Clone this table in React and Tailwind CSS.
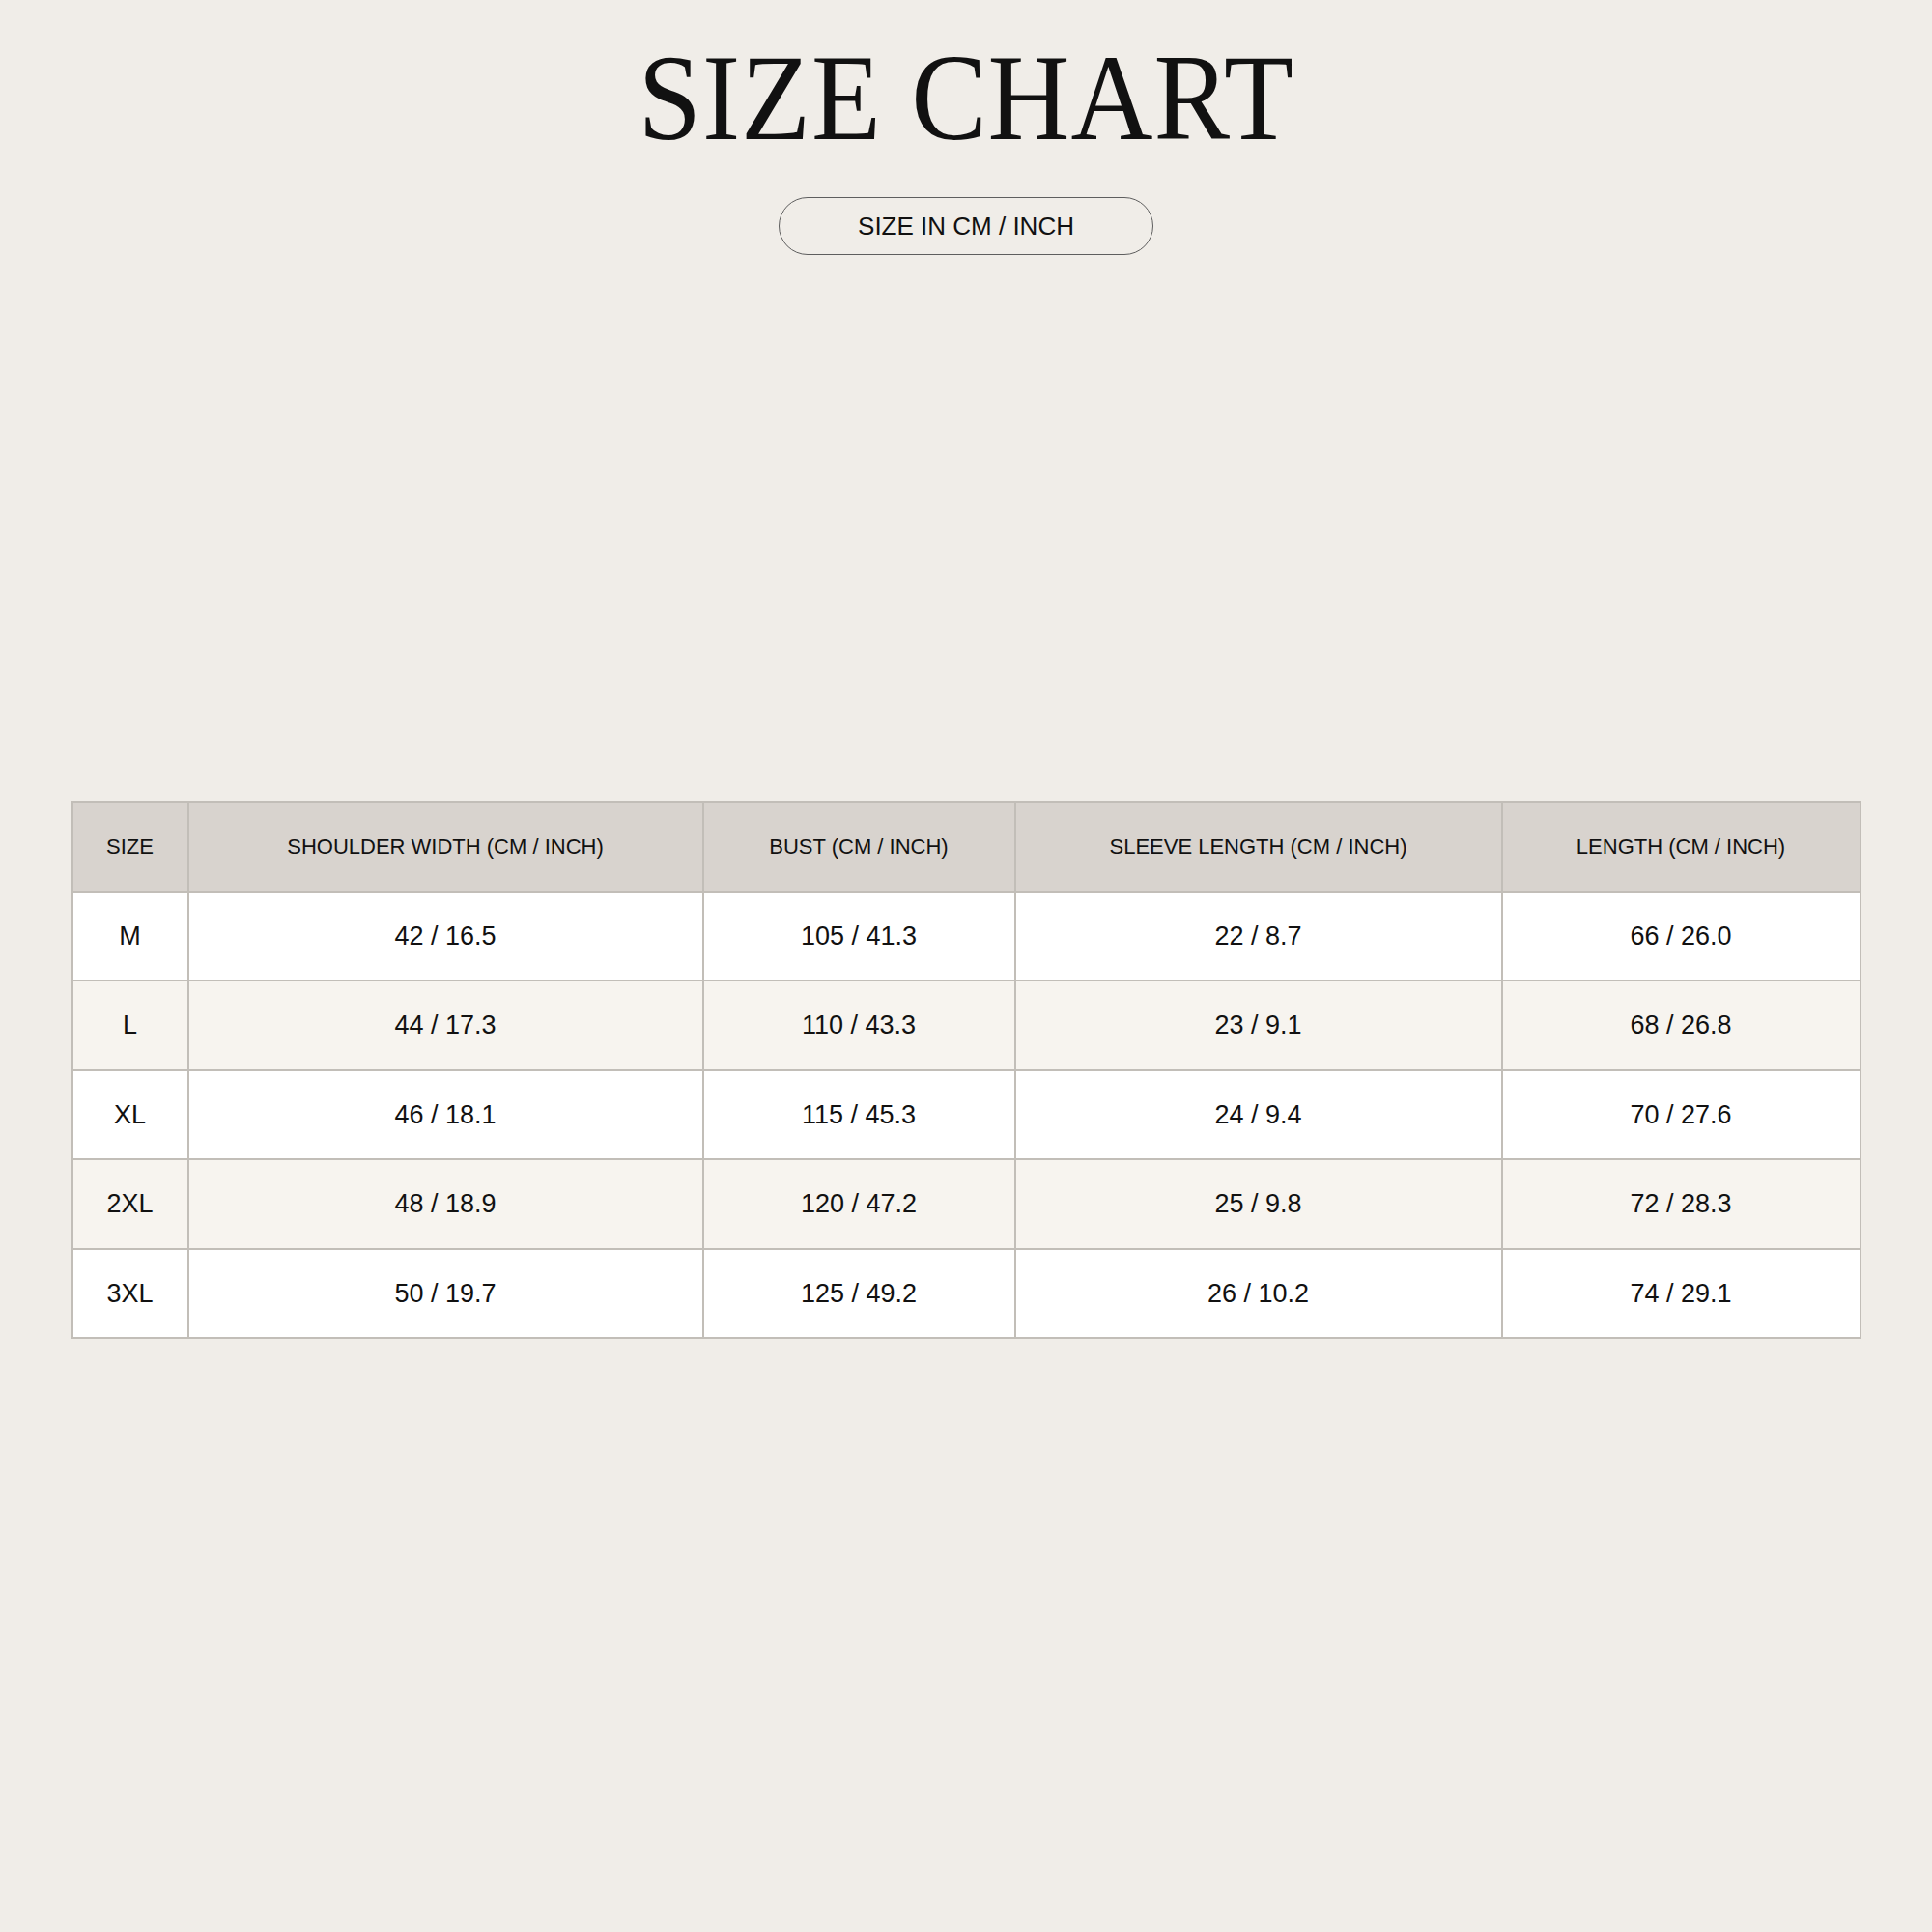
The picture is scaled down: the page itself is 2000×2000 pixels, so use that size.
const rows = [
    { size: "M", shoulder: "42 / 16.5", bust: "105 / 41.3", sleeve: "22 / 8.7", length: "66 / 26.0" },
    { size: "L", shoulder: "44 / 17.3", bust: "110 / 43.3", sleeve: "23 / 9.1", length: "68 / 26.8" },
    { size: "XL", shoulder: "46 / 18.1", bust: "115 / 45.3", sleeve: "24 / 9.4", length: "70 / 27.6" },
    { size: "2XL", shoulder: "48 / 18.9", bust: "120 / 47.2", sleeve: "25 / 9.8", length: "72 / 28.3" },
    { size: "3XL", shoulder: "50 / 19.7", bust: "125 / 49.2", sleeve: "26 / 10.2", length: "74 / 29.1" },
];

const headers = [
    "SIZE",
    "SHOULDER WIDTH (CM / INCH)",
    "BUST (CM / INCH)",
    "SLEEVE LENGTH (CM / INCH)",
    "LENGTH (CM / INCH)",
];

const App = () => {
    return (
        <div className="w-[2000px] h-[2000px] bg-[#f0ede8] text-[#111] font-['Liberation_Sans',Arial,sans-serif] flex flex-col items-center">
            <div className="pt-[37px] h-[171px] flex justify-center">
                <h1 className="inline-block scale-x-[0.92] font-['Liberation_Serif','Times_New_Roman',serif] text-[128px] leading-none tracking-[1px] whitespace-nowrap">
                    SIZE CHART
                </h1>
            </div>

            <div className="mt-[33px] w-[388px] h-[60px] rounded-full border border-[#5e5e5e] flex items-center justify-center text-[26px] leading-none">
                SIZE IN CM / INCH
            </div>

            <table className="mt-[565px] w-[1851px] table-fixed border-collapse border-2 border-[#c2beb8]">
                <colgroup>
                    <col className="w-[120px]" />
                    <col className="w-[533px]" />
                    <col className="w-[323px]" />
                    <col className="w-[504px]" />
                    <col className="w-[371px]" />
                </colgroup>
                <thead>
                    <tr className="h-[92.5px] bg-[#d8d3ce]">
                        {headers.map((h) => (
                            <th key={h} className="border-2 border-[#c2beb8] font-normal text-[22px] text-center">
                                {h}
                            </th>
                        ))}
                    </tr>
                </thead>
                <tbody>
                    {rows.map((r, i) => (
                        <tr key={r.size} className={i % 2 === 0 ? "h-[92.5px] bg-white" : "h-[92.5px] bg-[#f7f4ef]"}>
                            <td className="border-2 border-[#c2beb8] text-[27px] text-center">{r.size}</td>
                            <td className="border-2 border-[#c2beb8] text-[27px] text-center">{r.shoulder}</td>
                            <td className="border-2 border-[#c2beb8] text-[27px] text-center">{r.bust}</td>
                            <td className="border-2 border-[#c2beb8] text-[27px] text-center">{r.sleeve}</td>
                            <td className="border-2 border-[#c2beb8] text-[27px] text-center">{r.length}</td>
                        </tr>
                    ))}
                </tbody>
            </table>
        </div>
    );
};

export default App;
